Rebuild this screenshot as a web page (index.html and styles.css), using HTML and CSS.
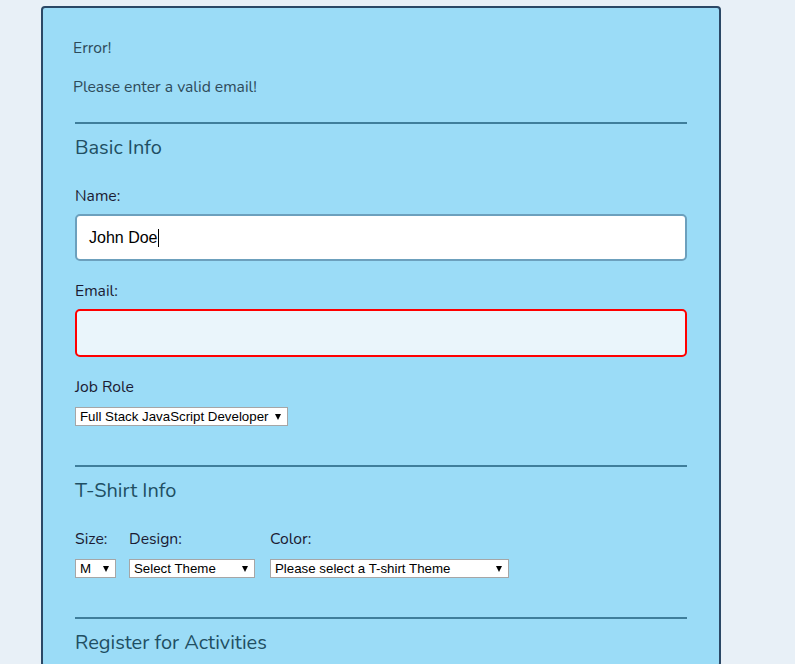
FILE: index.html
```html
<!DOCTYPE html>
<html lang="en">
<head>
<meta charset="utf-8">
<title>Registration</title>
<link rel="stylesheet" href="styles.css">
</head>
<body>
<form class="card">
  <div class="errors">
    <p>Error!</p>
    <p>Please enter a valid email!</p>
  </div>

  <section class="section">
    <h2 class="legend">Basic Info</h2>
    <label class="label" for="name">Name:</label>
    <div class="text-input"><span class="value">John Doe</span><span class="caret"></span></div>
    <label class="label label-gap" for="mail">Email:</label>
    <div class="text-input invalid"></div>
    <label class="label label-gap">Job Role</label>
    <div class="select select-job"><span>Full Stack JavaScript Developer</span></div>
  </section>

  <section class="section">
    <h2 class="legend">T-Shirt Info</h2>
    <div class="shirt-row">
      <div class="col col-size">
        <label class="label">Size:</label>
        <div class="select select-size"><span>M</span></div>
      </div>
      <div class="col col-design">
        <label class="label">Design:</label>
        <div class="select select-design"><span>Select Theme</span></div>
      </div>
      <div class="col">
        <label class="label">Color:</label>
        <div class="select select-color"><span>Please select a T-shirt Theme</span></div>
      </div>
    </div>
  </section>

  <section class="section section-last">
    <h2 class="legend">Register for Activities</h2>
  </section>
</form>
</body>
</html>
```
FILE: styles.css
```css
html, body {
  margin: 0;
  padding: 0;
  background: #e8f0f7;
  height: 100%;
  overflow: hidden;
}

body {
  font-family: "Nunito", "Lato", "Noto Sans", sans-serif;
  font-size: 15.7px;
}

.card {
  margin: 6px 0 0 41px;
  width: 676px;
  background: #9bdcf7;
  border: 2px solid #2b4866;
  border-radius: 4px;
}

.errors {
  padding: 30px 0 0 30px;
  color: #2e4b5a;
}

.errors p {
  margin: 0 0 19px 0;
  line-height: 20px;
}

.errors p:last-child {
  margin-bottom: 25px;
}

.section {
  margin: 0 32px;
  border-top: 2px solid #3f7e9b;
  padding: 12px 0 39px 0;
}

.section-last {
  padding-bottom: 10px;
}

.legend {
  margin: 0;
  font-weight: normal;
  font-size: 20px;
  line-height: 24px;
  color: #1f4f63;
}

.label {
  display: block;
  margin-top: 26px;
  line-height: 20px;
  color: #1b1b33;
}

.label-gap {
  margin-top: 20px;
}

.text-input {
  margin-top: 8px;
  height: 43px;
  border: 2px solid #6ca0bd;
  border-radius: 5px;
  background: #ffffff;
  display: flex;
  align-items: center;
  padding-left: 12px;
  font-family: "Liberation Sans", Arial, sans-serif;
  font-size: 16px;
  color: #000;
}

.caret {
  width: 1px;
  height: 18px;
  background: #000;
}

.invalid {
  border-color: #ff0000;
  background: #eaf5fb;
  height: 44px;
}

.select {
  position: relative;
  margin-top: 10px;
  height: 17px;
  border: 1px solid #a6a6a6;
  background: #ffffff;
  font-family: "Liberation Sans", Arial, sans-serif;
  font-size: 13.3px;
  line-height: 17px;
  color: #000;
  padding-left: 4px;
}

.select::after {
  content: "";
  position: absolute;
  right: 6px;
  top: 6px;
  border-left: 3.5px solid transparent;
  border-right: 3.5px solid transparent;
  border-top: 6px solid #000;
}

.select-job { width: 207px; }
.select-size { width: 35px; }
.select-design { width: 120px; }
.select-color { width: 233px; }

.shirt-row {
  display: flex;
}

.col-size { margin-right: 13px; }
.col-design { margin-right: 15px; }
```
